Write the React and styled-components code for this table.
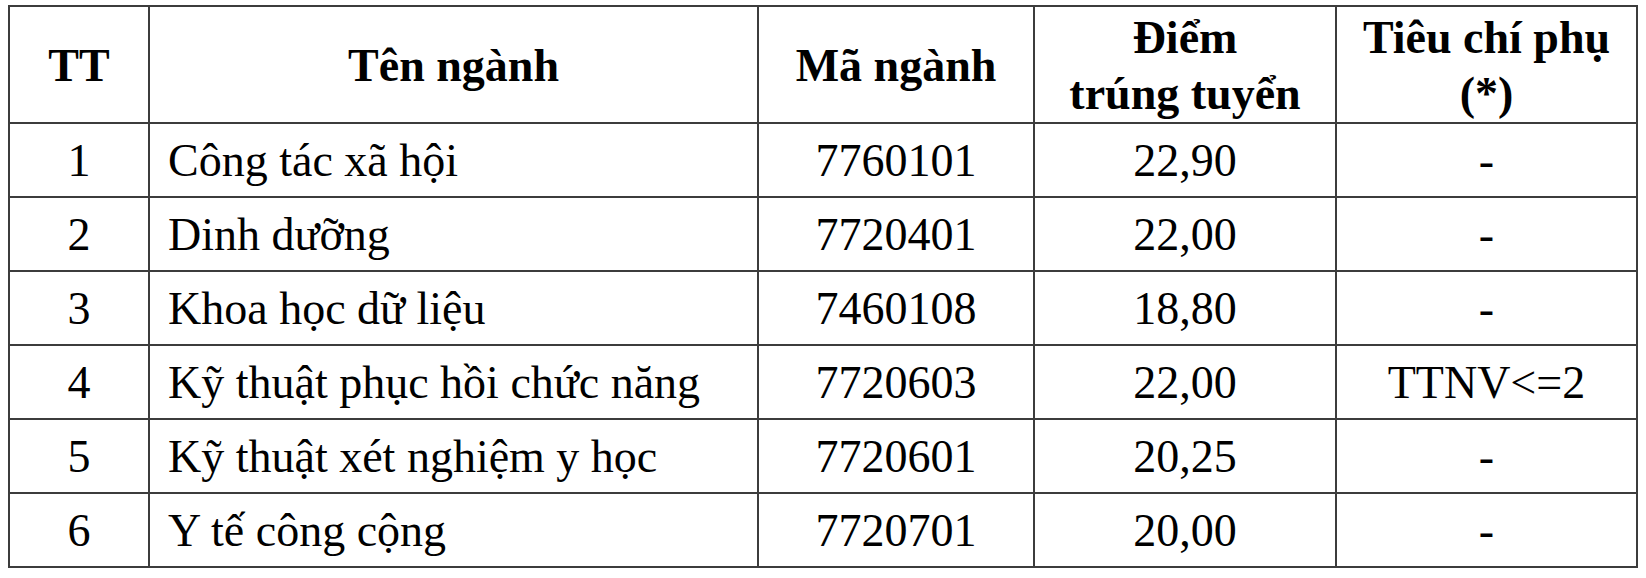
import styled, { createGlobalStyle } from "styled-components";

const GlobalStyle = createGlobalStyle`
  html, body {
    background: #fff;
  }
  body {
    margin: 5px 8px;
    font-family: "Liberation Serif", "Times New Roman", serif;
    color: #000;
  }
`;

const Table = styled.table`
  width: 1628px;
  border-collapse: collapse;
  table-layout: fixed;
  font-family: "Liberation Serif", "Times New Roman", serif;
  font-size: 46px;
  color: #000;
`;

const HeadCell = styled.th`
  height: 112px;
  padding: 3px 4px 0;
  border: 2px solid #3c3c3c;
  font-weight: 700;
  line-height: 56px;
  text-align: center;
  vertical-align: middle;
  white-space: nowrap;
`;

const Cell = styled.td`
  height: 69px;
  padding: ${({ $align }) => ($align === "left" ? "3px 10px 0 18px" : "3px 4px 0")};
  border: 2px solid #3c3c3c;
  line-height: 1.15;
  text-align: ${({ $align }) => $align || "center"};
  vertical-align: middle;
  white-space: nowrap;
`;

const rows = [
  ["1", "Công tác xã hội", "7760101", "22,90", "-"],
  ["2", "Dinh dưỡng", "7720401", "22,00", "-"],
  ["3", "Khoa học dữ liệu", "7460108", "18,80", "-"],
  ["4", "Kỹ thuật phục hồi chức năng", "7720603", "22,00", "TTNV<=2"],
  ["5", "Kỹ thuật xét nghiệm y học", "7720601", "20,25", "-"],
  ["6", "Y tế công cộng", "7720701", "20,00", "-"],
];

export default function App() {
  return (
    <>
      <GlobalStyle />
      <Table>
        <colgroup>
          <col style={{ width: 140 }} />
          <col style={{ width: 609 }} />
          <col style={{ width: 276 }} />
          <col style={{ width: 302 }} />
          <col style={{ width: 301 }} />
        </colgroup>
        <thead>
          <tr>
            <HeadCell>TT</HeadCell>
            <HeadCell>Tên ngành</HeadCell>
            <HeadCell>Mã ngành</HeadCell>
            <HeadCell>
              Điểm
              <br />
              trúng tuyển
            </HeadCell>
            <HeadCell>
              Tiêu chí phụ
              <br />
              (*)
            </HeadCell>
          </tr>
        </thead>
        <tbody>
          {rows.map(([tt, name, code, score, extra]) => (
            <tr key={tt}>
              <Cell>{tt}</Cell>
              <Cell $align="left">{name}</Cell>
              <Cell>{code}</Cell>
              <Cell>{score}</Cell>
              <Cell>{extra}</Cell>
            </tr>
          ))}
        </tbody>
      </Table>
    </>
  );
}
